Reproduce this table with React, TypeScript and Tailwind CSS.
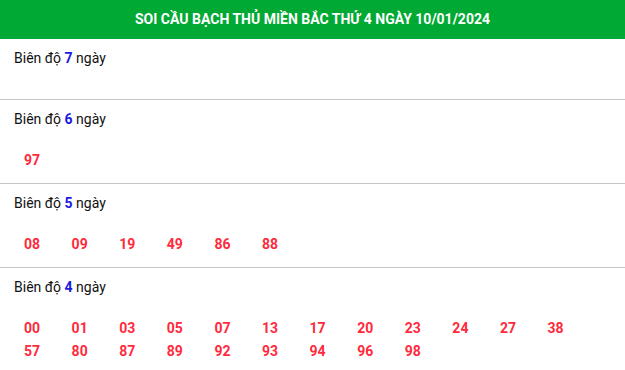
const sections: { days: number; nums: string[] }[] = [
  { days: 7, nums: [] },
  { days: 6, nums: ['97'] },
  { days: 5, nums: ['08', '09', '19', '49', '86', '88'] },
  {
    days: 4,
    nums: ['00', '01', '03', '05', '07', '13', '17', '20', '23', '24', '27', '38', '57', '80', '87', '89', '92', '93', '94', '96', '98'],
  },
];

export default function App() {
  return (
    <div className="w-[625px] bg-white font-[Roboto,sans-serif]">
      <div className="h-[39px] bg-[#00a933] flex items-center justify-center">
        <h1 className="text-white font-bold text-[14px]">SOI CẦU BẠCH THỦ MIỀN BẮC THỨ 4 NGÀY 10/01/2024</h1>
      </div>
      {sections.map((s, i) => (
        <div key={s.days} className={`px-[14px] pt-[9px] pb-[11px] ${i < sections.length - 1 ? 'border-b border-[#c6c6c6]' : ''}`}>
          <div className="text-[14px] leading-5 text-[#111]">
            Biên độ <span className="font-bold text-[#1a1ae0]">{s.days}</span> ngày
          </div>
          <div className="mt-5 flex flex-wrap">
            {s.nums.map((n) => (
              <span key={n} className="w-[47.6px] pl-[10px] leading-[23px] text-[14px] font-bold text-[#ff2a3c]">
                {n}
              </span>
            ))}
          </div>
        </div>
      ))}
    </div>
  );
}
